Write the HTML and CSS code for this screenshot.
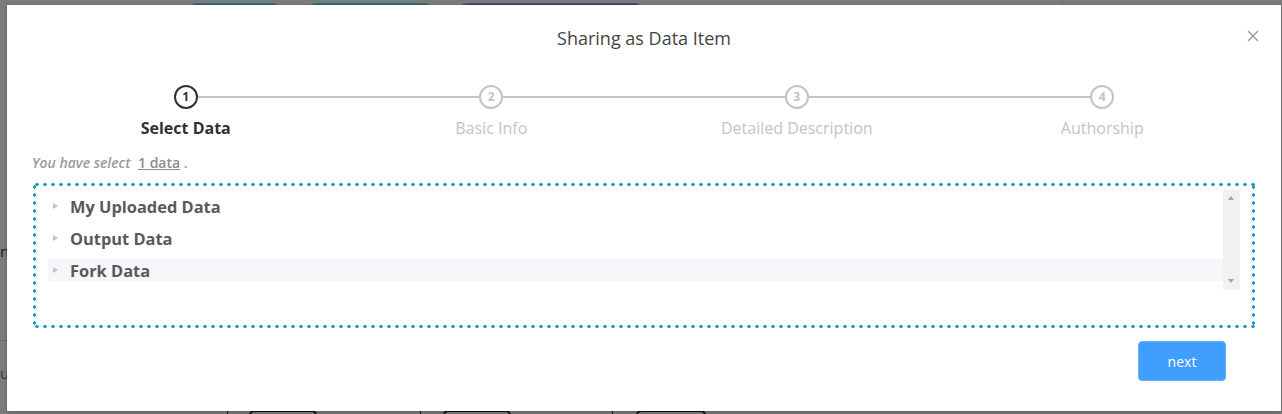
FILE: index.html
```html
<!DOCTYPE html>
<html lang="en">
<head>
<meta charset="utf-8">
<title>Sharing as Data Item</title>
<link rel="stylesheet" href="styles.css">
</head>
<body>
<div class="page-bg">
  <span class="pill pill-a"></span>
  <span class="pill pill-b"></span>
  <span class="pill pill-c"></span>
  <span class="vline vline-top"></span>
  <span class="bg-letter bg-letter-n">n</span>
  <span class="bg-letter bg-letter-u">u</span>
  <span class="bg-hline"></span>
  <span class="bg-box bg-box-a"></span>
  <span class="bg-box bg-box-b"></span>
  <span class="bg-box bg-box-c"></span>
  <span class="vline vline-b1"></span>
  <span class="vline vline-b2"></span>
  <span class="vline vline-b3"></span>
</div>

<div class="modal">
  <button class="close" aria-label="Close">
    <svg width="12" height="12" viewBox="0 0 12 12"><path d="M1 1L11 11M11 1L1 11" stroke="#909399" stroke-width="1.2" fill="none"/></svg>
  </button>
  <h2 class="title">Sharing as Data Item</h2>

  <div class="steps">
    <div class="step is-active">
      <div class="step-head"><span class="step-line"></span><span class="step-icon">1</span></div>
      <div class="step-title">Select Data</div>
    </div>
    <div class="step">
      <div class="step-head"><span class="step-line"></span><span class="step-icon">2</span></div>
      <div class="step-title">Basic Info</div>
    </div>
    <div class="step">
      <div class="step-head"><span class="step-line"></span><span class="step-icon">3</span></div>
      <div class="step-title">Detailed Description</div>
    </div>
    <div class="step">
      <div class="step-head"><span class="step-icon">4</span></div>
      <div class="step-title">Authorship</div>
    </div>
  </div>

  <p class="selected"><em>You have select</em> <a class="count">1 data</a> .</p>

  <div class="data-box">
    <div class="scroller">
      <ul class="tree">
        <li class="node"><span class="caret"></span>My Uploaded Data</li>
        <li class="node"><span class="caret"></span>Output Data</li>
        <li class="node is-hover"><span class="caret"></span>Fork Data</li>
      </ul>
      <div class="scrollbar">
        <span class="sb-arrow sb-up"></span>
        <span class="sb-arrow sb-down"></span>
      </div>
    </div>
  </div>

  <div class="footer">
    <button class="btn-next">next</button>
  </div>
</div>
</body>
</html>
```

FILE: styles.css
```css
* { box-sizing: border-box; }

html, body {
  margin: 0;
  padding: 0;
  width: 1282px;
  height: 414px;
  overflow: hidden;
}

body {
  background: #7b7b7b;
  font-family: "Open Sans", "Noto Sans", sans-serif;
  position: relative;
}

/* ---------- dimmed page behind the dialog ---------- */
.page-bg {
  position: absolute;
  inset: 0;
}
.pill {
  position: absolute;
  top: 3px;
  height: 24px;
  border-radius: 12px;
}
.pill-a { left: 186px; width: 98px; background: #2a6c74; }
.pill-b { left: 305px; width: 130px; background: #2a6a74; }
.pill-c { left: 456px; width: 190px; background: #5a3e69; }
.vline {
  position: absolute;
  width: 1px;
  background: #6a6a6a;
}
.vline-top { left: 1062px; top: 0; height: 6px; }
.vline-b1 { left: 227px; top: 408px; height: 6px; background: #111; }
.vline-b2 { left: 420px; top: 408px; height: 6px; background: #111; }
.vline-b3 { left: 612px; top: 408px; height: 6px; background: #111; }
.bg-box {
  position: absolute;
  top: 410px;
  height: 20px;
  border: 2px solid #111;
  border-radius: 5px;
}
.bg-box-a { left: 249px; width: 68px; }
.bg-box-b { left: 443px; width: 68px; }
.bg-box-c { left: 636px; width: 70px; }
.bg-letter {
  position: absolute;
  left: 0;
  font-size: 15px;
  color: #222;
  line-height: 1;
}
.bg-letter-n { top: 244px; }
.bg-letter-u { top: 366px; color: #2b3d52; }
.bg-hline {
  position: absolute;
  left: 0;
  top: 340px;
  width: 8px;
  height: 1px;
  background: #6c6c6c;
}

/* ---------- dialog ---------- */
.modal {
  position: absolute;
  left: 7px;
  top: 5px;
  width: 1274px;
  height: 406px;
  background: #fff;
  box-shadow: 0 1px 3px rgba(0, 0, 0, 0.3);
  padding: 20px 26px 0 26px;
}

.close {
  position: absolute;
  top: 25px;
  right: 22px;
  width: 12px;
  height: 12px;
  padding: 0;
  border: 0;
  background: transparent;
  display: flex;
}

.title {
  margin: 0;
  height: 26px;
  line-height: 26px;
  text-align: center;
  font-size: 18px;
  font-weight: 400;
  color: #444;
}

/* ---------- steps ---------- */
.steps {
  display: flex;
  margin-top: 34px;
}
.step {
  flex: 1 1 0;
  display: flex;
  flex-direction: column;
  align-items: center;
  color: #c0c4cc;
}
.step-head {
  position: relative;
  width: 100%;
  height: 24px;
  display: flex;
  justify-content: center;
}
.step-line {
  position: absolute;
  top: 11px;
  left: 50%;
  right: -50%;
  height: 2px;
  background: #c0c4cc;
}
.step-icon {
  position: relative;
  z-index: 1;
  width: 24px;
  height: 24px;
  border: 2px solid #c0c4cc;
  border-radius: 50%;
  background: #fff;
  display: flex;
  align-items: center;
  justify-content: center;
  font-size: 12px;
  font-weight: 700;
  color: #c0c4cc;
  line-height: 1;
}
.step-title {
  height: 38px;
  line-height: 38px;
  font-size: 16px;
  color: #c0c4cc;
}
.step.is-active .step-icon {
  border-color: #303133;
  color: #303133;
}
.step.is-active .step-title {
  color: #303133;
  font-weight: 700;
}

/* ---------- selection summary ---------- */
.selected {
  margin: 6px 0 0 -1px;
  height: 20px;
  line-height: 20px;
  font-size: 14px;
  font-weight: 600;
  color: #9a9a9a;
}
.selected em {
  font-style: italic;
}
.count {
  margin-left: 4px;
  text-decoration: underline;
  color: #8c8c8c;
  font-weight: 600;
  font-style: normal;
}

/* ---------- dotted data box ---------- */
.data-box {
  margin-top: 10px;
  height: 145px;
  padding: 7px 15px 0 15px;
  background:
    radial-gradient(circle at 50% 50%, #1a9ccb 1.5px, transparent 1.9px) 0 0 / 8px 3px repeat-x,
    radial-gradient(circle at 50% 50%, #1a9ccb 1.5px, transparent 1.9px) 0 100% / 8px 3px repeat-x,
    radial-gradient(circle at 50% 50%, #1a9ccb 1.5px, transparent 1.9px) 0 0 / 3px 8px repeat-y,
    radial-gradient(circle at 50% 50%, #1a9ccb 1.5px, transparent 1.9px) 100% 0 / 3px 8px repeat-y;
}
.scroller {
  display: flex;
  height: 100px;
}
.tree {
  flex: 1 1 auto;
  list-style: none;
  margin: 0;
  padding: 5px 0 0 0;
}
.node {
  display: flex;
  align-items: center;
  height: 22px;
  margin-bottom: 10px;
  padding-left: 5px;
  font-size: 16.4px;
  font-weight: 700;
  color: #58595e;
}
.node.is-hover {
  background: #f5f7fa;
}
.caret {
  width: 0;
  height: 0;
  border-top: 3.5px solid transparent;
  border-bottom: 3.5px solid transparent;
  border-left: 5px solid #c0c4cc;
  margin-right: 12px;
}
.scrollbar {
  flex: 0 0 17px;
  width: 17px;
  background: #f1f1f1;
  position: relative;
}
.sb-arrow {
  position: absolute;
  left: 5px;
  width: 0;
  height: 0;
  border-left: 3.5px solid transparent;
  border-right: 3.5px solid transparent;
}
.sb-up {
  top: 6px;
  border-bottom: 4px solid #a3a3a3;
}
.sb-down {
  bottom: 7px;
  border-top: 4px solid #a3a3a3;
}

/* ---------- footer ---------- */
.footer {
  display: flex;
  justify-content: flex-end;
  margin-top: 13px;
  padding-right: 29px;
}
.btn-next {
  width: 88px;
  height: 40px;
  border: 1px solid #66b1ff;
  border-radius: 4px;
  background: #409eff;
  color: #fff;
  font-family: "Open Sans", "Noto Sans", sans-serif;
  font-size: 14px;
  padding: 0;
}
```
